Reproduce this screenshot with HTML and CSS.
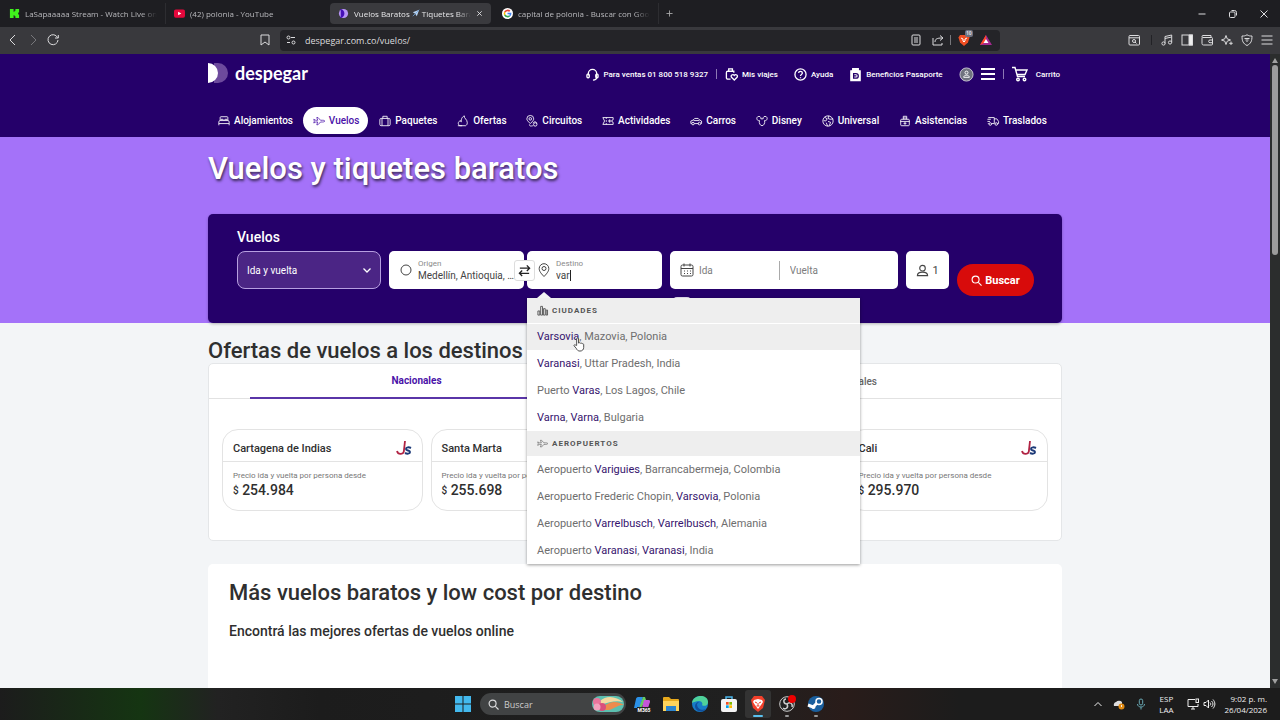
FILE: index.html
```html
<!DOCTYPE html>
<html lang="es">
<head>
<meta charset="utf-8">
<meta name="viewport" content="width=device-width, initial-scale=1">
<title>Vuelos Baratos - Tiquetes Baratos</title>
<link rel="stylesheet" href="styles.css">
</head>
<body>
<svg class="defs" aria-hidden="true">
  <symbol id="plane" viewBox="0 0 24 24"><path d="M1.500 8.500 5.500 10.500H9.500L7.500 5H10l5 5.500h4c2.500 0 4.500.6 4.500 1.700S21.500 14 19 14h-4l-5 5.500H7.500l2-5.500H5.500l-4 2 1.200-3.800z"/></symbol>
  <symbol id="despegar" viewBox="0 0 20 20"><path class="logo-back" d="M6 0h4a10 10 0 0 1 0 20H6z"/><path class="logo-front" d="M0 0a10 10 0 0 1 0 20z"/></symbol>
  <symbol id="js" viewBox="0 0 16 16"><path d="M1 11c1 4 7 4 7-1L9 1" fill="none" stroke="#b02343" stroke-width="1.8"/><path d="M15 8c-2-1-5-1-5 1s4 1 4 3-3 2-5 1" fill="none" stroke="#1d3a78" stroke-width="2"/></symbol>
</svg>

<div class="tabstrip">
  <div class="btab"><svg class="fav" viewBox="0 0 12 12"><path fill="#3ff21c" d="M1 1h4v3h1V3h1V1h4v4h-1v2h1v4H7V9H6V8H5v3H1z"/></svg><span class="btab-text">LaSapaaaaa Stream - Watch Live on Kick</span></div>
  <div class="btab"><svg class="fav" viewBox="0 0 12 12"><rect y="1.500" width="12" height="9" rx="2" fill="#e5083c"/><path d="M4.500 4v4L8 6z" fill="#fff"/></svg><span class="btab-text">(42) polonia - YouTube</span></div>
  <div class="btab active"><svg class="fav" viewBox="0 0 12 12"><circle cx="6" cy="6" r="5" fill="#b794f6"/><path d="M2 1a5 5 0 0 1 0 10 7 7 0 0 0 0-10z" fill="#4510b8"/><path d="M3 2a5 5 0 0 1 0 8z" fill="#4510b8"/></svg><span class="btab-text">Vuelos Baratos <svg class="mini" viewBox="0 0 10 10"><path d="M9 1 6 9 4 6 1 4z" fill="#b9d3f0"/><path d="M1 9 9 1" stroke="#6fa5df"/></svg> Tiquetes Baratos</span><button class="plain" aria-label="Cerrar pestaña"><svg class="x" viewBox="0 0 8 8"><path d="M1.500 1.500l5 5M6.500 1.500l-5 5"/></svg></button></div>
  <div class="btab"><svg class="fav" viewBox="0 0 12 12"><circle cx="6" cy="6" r="6" fill="#fff"/><g fill="none" stroke-width="1.700"><path d="M8.500 3.600A3.400 3.400 0 0 0 3 4.500" stroke="#ea4335"/><path d="M3 4.500a3.400 3.400 0 0 0 0 3" stroke="#fbbc05"/><path d="M3 7.500a3.400 3.400 0 0 0 5.400 1" stroke="#34a853"/><path d="M8.400 8.500A3.400 3.400 0 0 0 9.400 6H6" stroke="#4285f4"/></g></svg><span class="btab-text">capital de polonia - Buscar con Google</span></div>
  <button class="plain newtab" aria-label="Nueva pestaña"><svg class="x" viewBox="0 0 8 8"><path d="M4 .5v7M.5 4h7"/></svg></button>
  <div class="winbtns">
    <button class="plain" aria-label="Minimizar"><svg viewBox="0 0 10 10"><path d="M1.500 5h7"/></svg></button>
    <button class="plain" aria-label="Restaurar"><svg viewBox="0 0 10 10"><rect x="1.500" y="3" width="5.500" height="5.500" rx="1"/><path d="M3.500 1.500h3a2 2 0 0 1 2 2v3"/></svg></button>
    <button class="plain" aria-label="Cerrar"><svg viewBox="0 0 10 10"><path d="M1.500 1.500l7 7M8.500 1.500l-7 7"/></svg></button>
  </div>
</div>

<div class="toolbar">
  <div class="tb-nav">
    <button class="plain" aria-label="Atrás"><svg viewBox="0 0 12 12"><path d="M8 1 3 6l5 5"/></svg></button>
    <button class="plain dim" aria-label="Adelante"><svg viewBox="0 0 12 12"><path d="M4 1l5 5-5 5"/></svg></button>
    <button class="plain" aria-label="Recargar"><svg viewBox="0 0 12 12"><path d="M10.500 3.500A5 5 0 1 0 11 6M11.300 1v3H8"/></svg></button>
  </div>
  <button class="plain mark" aria-label="Marcador"><svg viewBox="0 0 12 12"><path d="M2 1h8v10L6 8l-4 3z"/></svg></button>
  <div class="urlbar">
    <svg viewBox="0 0 12 12"><circle cx="3.500" cy="3.500" r="1.500"/><path d="M6 3.500h4M2 8.500h3"/><circle cx="8.500" cy="8.500" r="1.500"/></svg>
    <input class="url" aria-label="Dirección" value="despegar.com.co/vuelos/">
    <svg viewBox="0 0 12 12"><rect x="2" y="1" width="8" height="10" rx="1"/><path d="M4 4h4M4 6h4M4 8h4"/></svg>
    <svg class="share" viewBox="0 0 12 12"><path d="M1 4v7h9V9M3 8c0-3 2-4 7-4M8 1.500 11 4 8 6.500"/></svg>
    <span class="vline"></span>
    <span class="shield"><svg viewBox="0 0 12 12"><path d="M2 1h8l1.500 2.500L10 8.500 6 12 2 8.500.5 3.500z" fill="#f04e23" stroke="none"/><path d="M3 4l2 1v2l1 1 1-1V5l2-1" stroke="#fff"/></svg><b>10</b></span>
    <svg class="bat" viewBox="0 0 12 12"><path d="M6 1 0 11h12z" fill="#a4288f" stroke="none"/><path d="M6 1 0 11l6-3z" fill="#ff4724" stroke="none"/><path d="M6 5 3.500 9h5z" fill="#fff" stroke="none"/></svg>
  </div>
  <div class="tb-tools">
    <svg viewBox="0 0 12 12"><rect x="1" y="1.500" width="10.500" height="9.500" rx="1"/><path d="M1 3.800h11"/><circle cx="6" cy="7" r="1.500"/><path d="M7 8l1.500 1.500"/></svg>
    <span class="vline dark"></span>
    <svg viewBox="0 0 12 12"><circle cx="2.500" cy="9.500" r="1.600"/><circle cx="9" cy="8.500" r="1.600"/><path d="M4 9.500V2.500L10.700 1v7.500M4 4.500l6.500-1.500"/></svg>
    <svg viewBox="0 0 12 12"><rect x="1" y="1" width="10.500" height="10"/><path d="M8 1h3.500v10H8z" fill="#eee"/></svg>
    <svg viewBox="0 0 12 12"><path d="M1 3.500v6a1.500 1.500 0 0 0 1.500 1.500h8a1 1 0 0 0 1-1V4.500a1 1 0 0 0-1-1H2a1 1 0 0 1 0-2h8v2"/><path d="M11.500 6H9a1.300 1.300 0 0 0 0 2.700h2.500"/></svg>
    <svg viewBox="0 0 12 12"><path d="M5 1.500 6.200 4.800 9.500 6 6.200 7.200 5 10.500 3.800 7.200.5 6l3.300-1.200zM10 7.500v3.500M8.200 9.300h3.500"/></svg>
    <svg viewBox="0 0 12 12"><path d="M6 .8c2 1.200 3 1.200 5 1.200 0 5-1 7.500-5 9.500C2 9.500 1 7 1 2c2 0 3 0 5-1.200z"/><path d="M3.500 4.500h5M4.500 6h3M5.500 7.500h1"/></svg>
    <svg class="menu" viewBox="0 0 12 12"><path d="M.5 2h11M.5 6h11M.5 10h11"/></svg>
  </div>
</div>

<div class="viewport">
<div class="page">
  <header class="site-header">
    <div class="wrap">
      <div class="topbar">
        <a class="brand" href="#"><svg viewBox="0 0 20 20"><use href="#despegar"/></svg>despegar</a>
        <div class="toplinks">
          <a class="phone" href="#"><svg viewBox="0 0 14 14"><path d="M2.500 8V6a4.500 4.500 0 0 1 9 0v4c0 2-1 3-4 3"/><rect x="1" y="6.500" width="2.500" height="4" rx="1"/><rect x="10.500" y="6.500" width="2.500" height="4" rx="1"/></svg>Para ventas 01 800 518 9327</a>
          <span class="sep"></span>
          <a class="trips" href="#"><svg viewBox="0 0 14 14"><path d="M6 12H3a1.500 1.500 0 0 1-1.500-1.500V5A1.500 1.500 0 0 1 3 3.500h6.500M4 3.500V1h4v2.500h1.500V5"/><path d="M10 13 7 10c-1.500-2 1.500-4 3-2 1.500-2 4.500 0 3 2z"/></svg>Mis viajes</a>
          <a class="help" href="#"><svg viewBox="0 0 14 14"><circle cx="7" cy="7" r="6"/><path d="M5 5.500c0-2.500 4-2.500 4 0C9 7 7 7 7 8.500M7 10v1"/></svg>Ayuda</a>
          <a class="passport" href="#"><svg viewBox="0 0 14 14"><path d="M2 3h10v10.500H2zM4 3V.8h6V3" fill="#fff"/><path d="M5 6h2.500a2.500 2.500 0 0 1 0 5H5zM5 8.500h3" stroke="#25006a"/></svg>Beneficios Pasaporte</a>
          <button class="plain account" aria-label="Menú de cuenta"><svg class="avatar" viewBox="0 0 16 16"><circle cx="8" cy="8" r="7" fill="#70737f" stroke="#c9c4d4"/><circle cx="8" cy="6" r="1.600"/><path d="M5 11c0-3 6-3 6 0z"/></svg><svg class="burger" viewBox="0 0 14 14"><path d="M0 2h14M0 7h14M0 12h14"/></svg></button>
          <span class="sep"></span>
          <a class="cart" href="#"><svg viewBox="0 0 16 16"><path d="M0 1.500h3l2.500 9H13M4 4h11l-2 4.500H5"/><circle cx="6" cy="13.500" r="1.300"/><circle cx="12.500" cy="13.500" r="1.300"/></svg>Carrito</a>
        </div>
      </div>
      <nav class="products">
        <a href="#"><svg viewBox="0 0 14 14"><path d="M2.500 6.500V3a1 1 0 0 1 1-1h7a1 1 0 0 1 1 1v3.500M1 12V8a1.500 1.500 0 0 1 1.500-1.500h9A1.500 1.500 0 0 1 13 8v4M1 10h12M3.500 6.500V5H6v1.500M8 6.500V5h2.500v1.500"/></svg>Alojamientos</a>
        <a href="#" class="current"><svg viewBox="0 0 24 24"><use href="#plane"/></svg>Vuelos</a>
        <a href="#"><svg viewBox="0 0 14 14"><rect x="1" y="4" width="12" height="8.500" rx="1.500"/><path d="M4.500 4V1.500h5V4M3.500 4v8.500M10.500 4v8.500"/></svg>Paquetes</a>
        <a href="#"><svg viewBox="0 0 14 14"><path d="M3 12.500c-3-3-1-5 1-6 0 1 .5 1.500 1 1.500 0-3 0-5 3.500-7C8 4 12 5 12 9c0 2-1 3-2 3.500z"/><path d="M1 12.500h5"/></svg>Ofertas</a>
        <a href="#"><svg viewBox="0 0 14 14"><path d="M5 10C2 7 1 6 1 4.500a4 4 0 0 1 8 0C9 6 8 7 5 10z"/><circle cx="5" cy="4.500" r="1.500"/><path d="M8 9.500c2-3 5-1 4.500.5M4 11c0 3 3 1.500 4.500 1.500"/><circle cx="10.800" cy="11" r="2"/></svg>Circuitos</a>
        <a href="#"><svg viewBox="0 0 14 14"><path d="M1 3h12v2.500a1.500 1.500 0 0 0 0 3V11H1l2-4z"/><path d="M5 3v1.500M5 6v2M5 9.500V11M9 5v4M7 7h4"/></svg>Actividades</a>
        <a href="#"><svg viewBox="0 0 14 14"><path d="M2 10H1V7l2.500-1L5.500 4h4l2 2L13.500 7v3h-1M5 10h5M4 6.500h7"/><circle cx="3.500" cy="10" r="1.500"/><circle cx="11" cy="10" r="1.500"/></svg>Carros</a>
        <a href="#"><svg viewBox="0 0 14 14"><path d="M4 6.500C1 7 0 3.500 2 2c2-1 4 0 3.700 2.500h2.600C8 2 10 1 12 2c2 1.500 1 5-2 4.500.8 3-1 6-3 6s-3.800-3-3-6z"/></svg>Disney</a>
        <a href="#"><svg viewBox="0 0 14 14"><circle cx="7" cy="7" r="6"/><path d="M3 2.500l3 2L4.500 7 2 6.500M8 1l-1 3 2.500 1L13 4.500M7 7.500l3 1-1.500 4M5 9l1.500 4"/></svg>Universal</a>
        <a href="#"><svg viewBox="0 0 14 14"><rect x="2" y="5" width="10" height="7.500" rx="1"/><path d="M1.500 7.500h11M5 5V3.500M9 5V3.500M5 1.500h4v2H5zM7 8v3.500M5.300 9.700h3.400"/></svg>Asistencias</a>
        <a href="#"><svg viewBox="0 0 14 14"><path d="M2 10H1M1.500 3h7v7h-3M.5 5h4M.5 7.500h3M8.500 4.500h3l2 3V10h-1"/><circle cx="3.800" cy="10.500" r="1.500"/><circle cx="10.800" cy="10.500" r="1.500"/></svg>Traslados</a>
      </nav>
    </div>
  </header>

  <section class="hero">
    <div class="wrap">
      <h1>Vuelos y tiquetes baratos</h1>
      <form class="searchbox">
        <h2 class="form-title">Vuelos</h2>
        <div class="fields">
          <div class="trip"><select aria-label="Tipo de viaje"><option>Ida y vuelta</option></select><svg viewBox="0 0 10 10"><path d="M1.500 3.500 5 7l3.500-3.500"/></svg></div>
          <div class="places">
            <div class="field">
              <svg class="ico" viewBox="0 0 14 14"><circle cx="7" cy="7" r="5"/></svg>
              <div class="labelled"><label for="origen">Origen</label><input id="origen" value="Medellín, Antioquia, Colombia"></div>
            </div>
            <button type="button" class="swap" aria-label="Intercambiar origen y destino"><svg viewBox="0 0 14 14"><path d="M2 4.500h10.500M9.500 1.500l3 3-3 3M12 10H1.500M4.500 7l-3 3 3 3"/></svg></button>
            <div class="field">
              <svg class="ico" viewBox="0 0 14 14"><path d="M7 13.500C3 9.500 2.200 7.500 2.200 5.500a4.800 4.800 0 0 1 9.600 0c0 2-.8 4-4.800 8z"/><circle cx="7" cy="5.500" r="2"/></svg>
              <div class="labelled"><label for="destino">Destino</label><span class="typing"><input id="destino" value="var"><i class="caret"></i></span></div>
              <div class="suggest">
                <h3><svg viewBox="0 0 12 12"><path d="M1 11V6.500h2V11zM4 11V1.500h2V11zM7 11V4h2V11zM10 11V5.500h1.500V11z"/></svg>CIUDADES</h3>
                <ul>
                  <li class="hover"><b>Varsovia</b>, Mazovia, Polonia</li>
                  <li><b>Varanasi</b>, Uttar Pradesh, India</li>
                  <li>Puerto <b>Varas</b>, Los Lagos, Chile</li>
                  <li><b>Varna</b>, <b>Varna</b>, Bulgaria</li>
                </ul>
                <h3><svg class="thin" viewBox="0 0 24 24"><use href="#plane"/></svg>AEROPUERTOS</h3>
                <ul>
                  <li>Aeropuerto <b>Variguies</b>, Barrancabermeja, Colombia</li>
                  <li>Aeropuerto Frederic Chopin, <b>Varsovia</b>, Polonia</li>
                  <li>Aeropuerto <b>Varrelbusch</b>, <b>Varrelbusch</b>, Alemania</li>
                  <li>Aeropuerto <b>Varanasi</b>, <b>Varanasi</b>, India</li>
                </ul>
                <svg class="pointer" viewBox="0 0 12 16"><path d="M3.500 9V2a1 1 0 0 1 2 0v4.500c.5-.6 1.700-.5 2 .2.600-.5 1.600-.2 1.800.5.700-.3 1.700 0 1.700 1V11c0 2.500-1.500 4-4 4-2 0-3-1-4-3L.8 9.500c-.5-1 .7-1.700 1.500-.9z"/></svg>
              </div>
            </div>
          </div>
          <div class="dates-col">
            <div class="field dates">
              <svg class="ico" viewBox="0 0 14 14"><rect x="1" y="2" width="12" height="11" rx="1.500"/><path d="M1 5.500h12M4 .5v3M10 .5v3M4 8h1M7 8h1M10 8h1M4 10.500h1M7 10.500h1M10 10.500h1"/></svg>
              <input class="out" aria-label="Ida" placeholder="Ida">
              <input class="back" aria-label="Vuelta" placeholder="Vuelta">
            </div>
            <input type="checkbox" class="toggle" aria-label="Todavía no he decidido la fecha">
          </div>
          <button type="button" class="people"><svg viewBox="0 0 14 14"><circle cx="7" cy="4.500" r="3"/><path d="M1.500 12.500c0-5 11-5 11 0z"/></svg>1</button>
          <button type="button" class="go"><svg viewBox="0 0 12 12"><circle cx="5" cy="5" r="3.800"/><path d="M8 8l3.500 3.500"/></svg>Buscar</button>
        </div>
      </form>
    </div>
  </section>

  <main class="wrap">
    <h2 class="section-title">Ofertas de vuelos a los destinos</h2>
    <section class="offers">
      <div class="tabs"><button class="plain on">Nacionales</button><button class="plain">Internacionales</button></div>
      <div class="cards">
        <article class="card"><header><h3>Cartagena de Indias</h3><svg viewBox="0 0 16 16"><use href="#js"/></svg></header><p>Precio ida y vuelta por persona desde</p><strong><small>$</small> 254.984</strong></article>
        <article class="card"><header><h3>Santa Marta</h3></header><p>Precio ida y vuelta por persona desde</p><strong><small>$</small> 255.698</strong></article>
        <article class="card"></article>
        <article class="card"><header><h3>Cali</h3><svg viewBox="0 0 16 16"><use href="#js"/></svg></header><p>Precio ida y vuelta por persona desde</p><strong><small>$</small> 295.970</strong></article>
      </div>
    </section>
    <section class="more">
      <h2>Más vuelos baratos y low cost por destino</h2>
      <h3>Encontrá las mejores ofertas de vuelos online</h3>
    </section>
  </main>
</div>
<div class="scrollbar"><i class="up"></i><i class="thumb"></i><i class="down"></i></div>
</div>

<footer class="taskbar">
  <div class="tray-pad"></div>
  <div class="apps">
    <svg class="app" viewBox="0 0 16 16"><path fill="#43b9ee" d="M0 0h7.500v7.500H0zM8.500 0H16v7.500H8.500zM0 8.500h7.500V16H0zM8.500 8.500H16V16H8.500z"/></svg>
    <label class="winsearch"><svg viewBox="0 0 12 12"><circle cx="5" cy="5" r="3.800"/><path d="M8 8l3.500 3.500"/></svg><input placeholder="Buscar"><svg class="art" viewBox="0 0 32 16"><rect width="32" height="16" rx="8" fill="#5cc0b0"/><path d="M8 5c7-7 17-4 23 1-7-2-13 0-23 3z" fill="#f4d9a0"/><path d="M12 10c7-5 13-5 20-1-7-1-11 6-19 5z" fill="#ee8b4d"/><circle cx="5" cy="6" r="4" fill="#e8759d"/><circle cx="10" cy="11" r="4" fill="#d94f7d"/><circle cx="5" cy="11" r="3.500" fill="#f2a0bd"/></svg></label>
    <svg class="app" viewBox="0 0 16 16"><path d="M4 1h5L6 12H0L2 3c0-1 1-2 2-2z" fill="#2b91e8"/><path d="M9 1h2l1 3-5 8H5z" fill="#66cb61"/><path d="M10 4h5c1 0 1 1 1 2l-2 6H8z" fill="#c455d8"/><path d="M3 11h13v5H3z" fill="#222"/><text x="3.500" y="15.500" class="m365">M365</text></svg>
    <svg class="app" viewBox="0 0 16 16"><path d="M0 2a1 1 0 0 1 1-1h5l2 2h7a1 1 0 0 1 1 1v10H0z" fill="#e8a91c"/><path d="M0 5h16v10H0z" fill="#ffd45c"/><path d="M3 10h10v5H3z" fill="#2c85cf"/></svg>
    <svg class="app" viewBox="0 0 16 16"><circle cx="8" cy="8" r="8" fill="#177cc7"/><path d="M0 7C1-2 16-2 16 6c0 5-6 4-6 3 1-1 0-4-3-4-3 0-5 1-7 2z" fill="#4fd29a"/><path d="M5 8c0 5 5 7 9 5-3 4-11 3-11-3 0-2 2-4 4-4z" fill="#0f4f9d"/></svg>
    <svg class="app" viewBox="0 0 16 16"><path d="M5 4V1h6v3" fill="none" stroke="#4bb7ec" stroke-width="1.500"/><rect x="0" y="3" width="16" height="13" rx="2" fill="#f4f4f4"/><path d="M5 6h2.700v2.700H5z" fill="#f25022"/><path d="M8.300 6H11v2.700H8.300z" fill="#7fba00"/><path d="M5 9.300h2.700V12H5z" fill="#00a4ef"/><path d="M8.300 9.300H11V12H8.300z" fill="#ffb900"/></svg>
    <span class="running front"><svg class="app" viewBox="0 0 16 16"><path d="M4 0h8l3 4-2 8-5 4-5-4-2-8z" fill="#f2402b"/><path d="M4 4l4-1 4 1 1 2-2 3-3 4-3-4-2-3z" fill="#fff"/><path d="M5 6l2 1M11 6 9 7M8 7v3M6.500 10h3" stroke="#f2402b"/></svg></span>
    <span class="running"><svg class="app" viewBox="0 0 16 16"><circle cx="8" cy="8" r="7.300" fill="#222" stroke="#ccc"/><path d="M8 8C4 8 4 3 7 3M8 8c2 4-2 6-4 4M8 8c3-3 6 0 5 3" fill="none" stroke="#ccc" stroke-width="1.500"/><circle cx="13" cy="3" r="4" fill="#e00"/></svg></span>
    <span class="running"><svg class="app" viewBox="0 0 16 16"><circle cx="8" cy="8" r="8" fill="#1a5f9e"/><path d="M0 9l5 2 4-4" fill="none" stroke="#fff" stroke-width="3"/><circle cx="11" cy="5.500" r="3" fill="#1a5f9e" stroke="#fff" stroke-width="1.500"/><circle cx="5.500" cy="11" r="2" fill="#fff"/></svg></span>
  </div>
  <div class="tray">
    <svg viewBox="0 0 12 12"><path d="M2.500 8 6 4.500 9.500 8"/></svg>
    <svg class="cloud" viewBox="0 0 12 12"><path d="M1 8a3 3 0 0 1 2-4 4 4 0 0 1 6 0v4z" fill="#ddd" stroke="none"/><circle cx="8.500" cy="8.500" r="3" fill="#e08a12" stroke="none"/><path d="M8.500 7v2"/></svg>
    <svg class="mic" viewBox="0 0 12 12"><rect x="4.300" y="1" width="3.400" height="6" rx="1.700"/><path d="M2.500 6c0 4 7 4 7 0M6 9v2.500"/></svg>
    <div class="lang">ESP<br>LAA</div>
    <svg class="net" viewBox="0 0 12 12"><path d="M8 1.500H1v7h10V6M4 11h4M6 8.500V11"/><rect x="9" y="1" width="2.500" height="3.500"/></svg>
    <svg viewBox="0 0 12 12"><path d="M1 4.500h2L5.500 2v8L3 7.500H1zM7 4.500c1 1 1 2 0 3M8.500 3c2 2 2 4 0 6M10 1.500c2.500 3 2.500 6 0 9"/></svg>
    <div class="clock">9:02 p. m.<br>26/04/2026</div>
  </div>
</footer>
</body>
</html>
```
FILE: styles.css
```css
* { box-sizing: border-box; }
html, body { height: 100%; }
body { margin: 0; display: flex; flex-direction: column; overflow: hidden; font-family: Roboto, "Liberation Sans", sans-serif; font-size: 10px; color: #2f2f2f; background: #202124; }
h1, h2, h3, p, ul { margin: 0; padding: 0; }
a { color: inherit; text-decoration: none; }
svg { flex: none; fill: none; stroke: currentColor; overflow: visible; }
input, button, select { font: inherit; color: inherit; min-width: 0; }
input { border: 0; padding: 0; background: none; outline: 0; }
.defs { position: absolute; width: 0; height: 0; }
.plain { border: 0; padding: 0; background: none; display: flex; align-items: center; justify-content: center; }

/* browser chrome */
.tabstrip, .toolbar, .taskbar { font-family: "Open Sans", "Noto Sans", sans-serif; flex: none; display: flex; align-items: center; color: #dcdcde; }
.tabstrip { height: 27px; background: #1e1e22; padding-left: 1px; }
.btab { width: 165px; height: 21px; display: flex; align-items: center; gap: 5px; padding: 0 8px; color: #b9b9bd; border-right: 1px solid #2d2d31; }
.btab:nth-child(2) { border: 0; }
.btab.active { width: 161px; margin: 0 3px 0 -1px; background: #3a3a3e; border: 0; border-radius: 4px; color: #e6e6e8; }
.btab-text { flex: 1; white-space: nowrap; overflow: hidden; font-size: 8px; -webkit-mask-image: linear-gradient(90deg, #000 88%, transparent); mask-image: linear-gradient(90deg, #000 88%, transparent); }
.btab svg { stroke: none; }
.fav { width: 11px; height: 11px; }
.mini { width: 8px; height: 8px; }
.x, .btab .x { width: 7px; height: 7px; stroke: currentColor; }
.newtab { margin-left: 7px; color: #aaa; }
.winbtns { margin-left: auto; display: flex; gap: 21px; padding-right: 11px; }
.winbtns svg { width: 10px; height: 10px; }
.toolbar { height: 27px; background: #39393d; padding-bottom: 1px; }
.toolbar svg { width: 12px; height: 12px; }
.tb-nav { display: flex; gap: 8px; padding-left: 7px; }
.dim { color: #77777b; }
.mark { margin-left: auto; }
.urlbar { flex: 0 1 720px; height: 21px; margin-left: 9px; padding: 0 8px 0 5px; display: flex; align-items: center; background: #242428; border-radius: 4px; }
.url { flex: 1; margin-left: 8px; font-size: 9px; }
.share { margin-left: 10px; }
.vline { width: 1px; height: 10px; margin: 0 7px 0 6px; background: #77777b; }
.shield { position: relative; display: flex; margin-right: 10px; }
.shield b { position: absolute; left: 7px; top: -4px; padding: 0 1px; font-size: 5px; line-height: 7px; border-radius: 2px; background: #6c7080; }
.tb-tools { margin-left: 128px; padding-right: 7px; display: flex; align-items: center; gap: 8px; }
.tb-tools .dark { margin: 0 1px 0 3px; background: #222226; }

.viewport { flex: 1; min-height: 0; display: flex; }
.page { flex: 1; min-width: 0; overflow: hidden; background: #f3f5f7; }
.scrollbar { width: 10px; background: #2b2d2d; display: flex; flex-direction: column; align-items: center; gap: 2px; padding: 4px 0; }
.up, .down { border: 3px solid transparent; }
.up { border-top: 0; border-bottom: 5px solid #a0a0a0; }
.down { border-bottom: 0; border-top: 5px solid #a0a0a0; margin-top: auto; }
.thumb { width: 6px; height: 190px; background: #9c9c9c; border-radius: 3px; }
.wrap { width: 100%; max-width: 854px; margin: 0 auto; }

/* header */
.site-header { height: 83px; background: #25006a; color: #fff; }
.topbar { height: 40px; display: flex; justify-content: space-between; align-items: center; }
.brand { display: flex; align-items: center; gap: 7px; padding-bottom: 2px; font: 700 18px/18px Lato, sans-serif; }
.brand svg { width: 20px; height: 20px; stroke: none; }
.logo-back { fill: #6d4a9d; }
.logo-front { fill: #fff; }
.toplinks { display: flex; align-items: center; font-size: 8px; font-weight: 500; }
.toplinks a { display: flex; align-items: center; gap: 4px; white-space: nowrap; }
.toplinks svg { width: 13px; height: 13px; stroke-width: 1.4; }
.sep { width: 1px; height: 10px; margin: 0 8px; background: #8d78b5; }
.help, .passport, .account { margin-left: 16px; }
.account { gap: 7px; }
.toplinks .avatar { width: 15px; height: 15px; stroke-width: 1; }
.toplinks .burger { width: 14px; height: 14px; stroke-width: 2; }
.toplinks .cart { gap: 8px; padding-right: 2px; }
.toplinks .cart svg { width: 16px; height: 16px; }
.products { height: 27px; margin-top: 13px; padding-right: 6px; display: flex; justify-content: space-between; font-size: 10px; font-weight: 500; }
.products a { display: flex; align-items: center; gap: 4px; padding: 0 9px 0 10px; border-radius: 14px; white-space: nowrap; }
.products svg { width: 12px; height: 12px; }
.products .current { background: #fff; color: #4a12a8; }
.products .current svg { stroke-width: 1.5; }

/* hero and search form */
.hero { height: 186px; background: #a472f9; }
.hero h1 { padding-top: 14px; color: #fff; font-size: 31px; line-height: 36px; font-weight: 500; text-shadow: 1px 2px 3px #000a; }
.searchbox { margin-top: 27px; height: 109px; padding: 14px 28px 0 29px; background: #25006a; border-radius: 5px; box-shadow: 0 1px 3px #0004; }
.form-title { color: #fff; font-size: 14px; line-height: 18px; font-weight: 500; }
.fields { margin-top: 5px; display: grid; grid-template-columns: minmax(0, 144fr) minmax(0, 273fr) minmax(0, 228fr) 43px 77px; gap: 8px; align-items: start; }
.trip { position: relative; color: #fff; }
.trip select { width: 100%; height: 38px; padding: 0 9px; appearance: none; border: 1px solid #b79fe0; border-radius: 8px; background: #4b2585; font-size: 10px; }
.trip svg { position: absolute; right: 9px; top: 14px; width: 10px; height: 10px; stroke-width: 1.3; }
.places { display: flex; gap: 3px; position: relative; }
.field { position: relative; flex: 1; min-width: 0; height: 38px; display: flex; align-items: center; gap: 5px; padding: 0 10px; background: #fff; border-radius: 5px; color: #444; }
.ico { width: 14px; height: 14px; }
.labelled { flex: 1; min-width: 0; display: flex; flex-direction: column; }
.labelled label { font-size: 8px; line-height: 12px; color: #8a8a8a; }
.labelled input { width: 100%; font-size: 10px; line-height: 12px; height: 12px; text-overflow: ellipsis; }
.typing { display: flex; }
.typing input { width: 14px; }
.caret { width: 1px; height: 11px; background: #222; }
.swap { position: absolute; z-index: 1; left: 50%; top: 50%; width: 21px; height: 21px; margin: -10px 0 0 -12px; padding: 0; display: flex; align-items: center; justify-content: center; background: #fff; border: 1px solid #ddd; border-radius: 3px; color: #222; }
.swap svg { width: 13px; height: 13px; stroke-width: 1.4; }
.dates-col { display: flex; flex-direction: column; align-items: flex-start; gap: 8px; }
.dates { flex: none; width: 100%; }
.dates input { width: 0; font-size: 10px; }
.dates .out { flex: 80 1 0; }
.dates .back { flex: 105 1 0; padding-left: 10px; border-left: 1px solid #aaa; height: 19px; }
.dates ::placeholder { color: #7d7d7d; opacity: 1; }
.toggle { appearance: none; margin: 0 0 0 2px; width: 20px; height: 10px; border-radius: 5px; background: #e8e0f4; }
.people { height: 38px; padding: 0; border: 0; border-radius: 5px; background: #fff; color: #444; display: flex; align-items: center; justify-content: center; gap: 3px; font-size: 11px; }
.people svg { width: 13px; height: 13px; stroke-width: 1.2; }
.go { height: 32px; margin-top: 13px; padding: 0; border: 0; border-radius: 16px; background: #d80b0b; color: #fff; font-size: 11px; font-weight: 700; display: flex; align-items: center; justify-content: center; gap: 3px; }
.go svg { width: 11px; height: 11px; stroke-width: 1.2; }

.suggest { position: absolute; z-index: 2; top: 47px; left: 0; width: 333px; background: #fff; box-shadow: 0 1px 3px #0006; color: #6e6e6e; }
.suggest::before { content: ""; position: absolute; left: 10px; top: -6px; border: 7px solid transparent; border-top: 0; border-bottom: 6px solid #f3f3f3; }
.suggest h3 { height: 25px; display: flex; align-items: center; gap: 4px; padding: 0 10px; background: #eee; color: #555; font-size: 8px; font-weight: 700; letter-spacing: 1px; }
.suggest h3 svg { width: 11px; height: 11px; }
.suggest h3 .thin { stroke-width: 1.3; }
.suggest ul { list-style: none; }
.suggest li { height: 27px; padding: 0 10px; font-size: 11px; line-height: 27px; white-space: nowrap; }
.suggest li.hover { background: #eee; border-top: 1px solid #fff; line-height: 26px; }
.suggest b { font-weight: 400; color: #36146e; }
.suggest .pointer { position: absolute; left: 46px; top: 39px; width: 12px; height: 15px; fill: #fff; stroke: #444; }

/* offers */
.section-title { padding-top: 16px; font-size: 22px; line-height: 24px; font-weight: 500; }
.offers { height: 178px; background: #fff; border: 1px solid #e4e6e8; border-radius: 5px; }
.tabs { height: 35px; display: flex; justify-content: space-between; padding: 0 52px 0 41px; border-bottom: 1px solid #e2e2e2; }
.tabs button { width: 333px; font-size: 10px; font-weight: 500; color: #666; }
.tabs .on { color: #4a12a8; font-weight: 700; border-bottom: 2px solid #5a35a8; margin-bottom: -1px; }
.cards { padding: 30px 13px 0; display: grid; grid-template-columns: repeat(4, 1fr); gap: 8px; }
.card { height: 82px; border: 1px solid #e3e3e3; border-radius: 16px; }
.card header { height: 32px; padding: 5px 10px 0; display: flex; align-items: center; justify-content: space-between; border-bottom: 1px solid #e3e3e3; }
.card header svg { width: 16px; height: 16px; }
.card h3 { font-size: 11px; font-weight: 500; }
.card p { padding: 7px 10px 0; font-size: 8px; line-height: 13px; color: #777; }
.card strong { display: block; padding-left: 10px; font-size: 14px; line-height: 16px; font-weight: 500; }
.card small { font-size: 10px; vertical-align: 1px; }
.more { margin-top: 23px; min-height: 300px; padding: 15px 21px; background: #fff; border-radius: 5px; }
.more h2 { font-size: 22px; line-height: 28px; font-weight: 500; }
.more h3 { margin-top: 14px; font-size: 14px; line-height: 20px; font-weight: 500; }

/* taskbar */
.taskbar { height: 32px; background: linear-gradient(90deg, #1c1c1c 0, #153512 11%, #222 17%, #1c1c1c 25%, #202020 58%, #291c1a 66%, #1c1c1c 75%); }
.tray-pad, .tray { flex: 1 1 0; }
.apps { display: flex; align-items: center; gap: 13px; padding-left: 12px; }
.app { width: 16px; height: 16px; stroke: none; }
.winsearch { width: 146px; height: 22px; margin: 0 -5px 0 -4px; padding: 0 2px 0 8px; display: flex; align-items: center; gap: 5px; background: #414344; border-radius: 11px; font-size: 9px; }
.winsearch svg { width: 11px; height: 11px; stroke-width: 1.3; }
.winsearch input { flex: 1; }
.winsearch ::placeholder { color: #ccc; opacity: 1; }
.winsearch .art { width: 32px; height: 16px; stroke: none; }
.m365 { font: 700 5px Roboto, sans-serif; fill: #fff; }
.running { position: relative; display: flex; align-items: center; height: 28px; }
.running::after { content: ""; position: absolute; bottom: 1px; left: 6px; width: 4px; height: 2px; border-radius: 1px; background: #999; }
.front { margin: 0 -5px; padding: 0 5px; background: #333; border-radius: 3px; }
.front::after { left: 8px; width: 10px; background: #5ac0ee; }
.tray { display: flex; align-items: center; justify-content: flex-end; padding-right: 13px; font-size: 8px; line-height: 11px; color: #eee; }
.tray svg { width: 12px; height: 12px; }
.cloud { margin-left: 9px; }
.mic { margin-left: 10px; color: #69a9b5; }
.lang { margin: 0 13px 0 12px; text-align: center; }
.net { margin-right: 4px; }
.clock { margin-left: 10px; text-align: right; }
```
